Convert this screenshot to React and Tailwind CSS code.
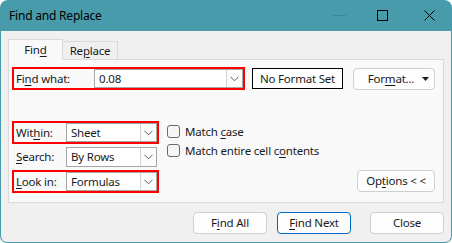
import React from "react";

const U = ({ children }) => (
  <span className="underline underline-offset-[2px] decoration-[1px]">{children}</span>
);

const Chevron = () => (
  <svg width="9" height="6" viewBox="0 0 9 6" className="block">
    <path d="M0.5 0.8 L4.5 4.8 L8.5 0.8" fill="none" stroke="#606060" strokeWidth="1" />
  </svg>
);

const Select = ({ children, w }) => (
  <div className={`${w} h-full bg-white border border-[#a6a6a6] flex items-center`}>
    <div className="flex-1 pl-[4px] leading-none">{children}</div>
    <div className="w-[16px] h-full border-l border-[#d4d4d4] bg-[#fbfbfb] flex items-center justify-center">
      <Chevron />
    </div>
  </div>
);

const Checkbox = ({ children }) => (
  <div className="flex items-center h-[19px]">
    <div className="w-[13px] h-[13px] rounded-[3px] border border-[#6a6a6a] bg-[#f6f6f6]" />
    <span className="ml-[5px]">{children}</span>
  </div>
);

const Btn = ({ children, className = "" }) => (
  <div
    className={`h-[22px] rounded-[4px] border bg-[#fdfdfd] flex items-center justify-center ${className}`}
  >
    {children}
  </div>
);

export default function App() {
  return (
    <div className="w-[452px] h-[243px] bg-white font-['Noto_Sans',sans-serif] text-[11.5px] tracking-[-0.2px] text-[#1a1a1a]">
      <div className="w-[452px] h-[243px] bg-[#489bab] rounded-t-[8px] rounded-b-[7px] flex flex-col">
        {/* Title bar */}
        <div className="h-[31px] flex items-center shrink-0">
          <div className="pl-[9px] text-[12px] text-black leading-none">Find and Replace</div>
          <div className="ml-auto mr-[1px] flex h-full">
            <div className="w-[46px] h-full flex items-center justify-center">
              <div className="w-[13px] h-[1px] bg-[#3d8594] ml-[6px] mt-[0px]" />
            </div>
            <div className="w-[46px] h-full flex items-center justify-center">
              <div className="w-[11px] h-[11px] border border-black ml-[1px]" />
            </div>
            <div className="w-[46px] h-full flex items-center justify-center">
              <svg width="11" height="11" viewBox="0 0 11 11" className="ml-[2px]">
                <path d="M0.5 0.5 L10.5 10.5 M10.5 0.5 L0.5 10.5" stroke="black" strokeWidth="1" />
              </svg>
            </div>
          </div>
        </div>

        {/* Client */}
        <div className="mx-[1px] mb-[1px] flex-1 bg-[#f0f0f0] rounded-b-[6px] flex flex-col px-[7px] pt-[8px]">
          {/* Tabs */}
          <div className="h-[20px] flex items-end">
            <div className="relative z-10 w-[55px] h-[21px] -mb-[1px] border border-b-0 border-[#d9d9d9] bg-[#f9f9f9] flex items-center justify-center pb-[1px]">
              Fin<U>d</U>
            </div>
            <div className="w-[55px] h-[18px] border border-l-0 border-b-0 border-[#d9d9d9] bg-[#f0f0f0] flex items-center justify-center">
              Re<U>p</U>lace
            </div>
          </div>

          {/* Panel */}
          <div className="w-[436px] h-[144px] border border-[#d9d9d9] bg-[#f9f9f9] flex flex-col pl-[3px] pt-[7px]">
            {/* Row 1 */}
            <div className="flex items-center">
              <div className="w-[233px] h-[23px] border-2 border-[#ff0000] flex items-center">
                <div className="w-[80px] pl-[2px]">
                  Fi<U>n</U>d what:
                </div>
                <Select w="w-[149px]">0.08</Select>
              </div>
              <div className="ml-[7px] w-[91px] h-[21px] border border-black bg-white flex items-center justify-center">
                No Format Set
              </div>
              <Btn className="ml-[10px] w-[82px] h-[21px] border-[#d0d0d0] relative">
                <span className="mr-[6px]">
                  For<U>m</U>at...
                </span>
                <svg width="7" height="4" viewBox="0 0 7 4" className="absolute right-[5px] top-[8px]">
                  <path d="M0 0 L7 0 L3.5 4 Z" fill="#1a1a1a" />
                </svg>
              </Btn>
            </div>

            {/* Row 2 */}
            <div className="mt-[31px] flex">
              <div className="flex flex-col w-[147px]">
                <div className="h-[23px] border-2 border-[#ff0000] flex items-center">
                  <div className="w-[52px] pl-[2px]">
                    Wit<U>h</U>in:
                  </div>
                  <Select w="w-[91px]">Sheet</Select>
                </div>
                <div className="mt-[3px] h-[20px] flex items-center px-[2px]">
                  <div className="w-[52px] pl-[2px]">
                    <U>S</U>earch:
                  </div>
                  <Select w="w-[91px]">By Rows</Select>
                </div>
                <div className="mt-[3px] h-[23px] border-2 border-[#ff0000] flex items-center">
                  <div className="w-[52px] pl-[2px]">
                    <U>L</U>ook in:
                  </div>
                  <Select w="w-[91px]">Formulas</Select>
                </div>
              </div>

              <div className="ml-[8px] flex flex-col pt-[1px]">
                <Checkbox>
                  Match <U>c</U>ase
                </Checkbox>
                <Checkbox>
                  Match entire cell c<U>o</U>ntents
                </Checkbox>
              </div>

              <div className="ml-auto mr-[8px] self-end mb-[1px]">
                <Btn className="w-[78px] border-[#d0d0d0]">
                  Op<U>t</U>ions &lt; &lt;
                </Btn>
              </div>
            </div>
          </div>

          {/* Bottom buttons */}
          <div className="mt-[9px] flex justify-end">
            <Btn className="w-[74px] border-[#d0d0d0]">
              F<U>i</U>nd All
            </Btn>
            <Btn className="ml-[10px] w-[74px] border-[#0067c0]">
              <U>F</U>ind Next
            </Btn>
            <Btn className="ml-[19px] w-[74px] border-[#d0d0d0]">Close</Btn>
          </div>
        </div>
      </div>
    </div>
  );
}
